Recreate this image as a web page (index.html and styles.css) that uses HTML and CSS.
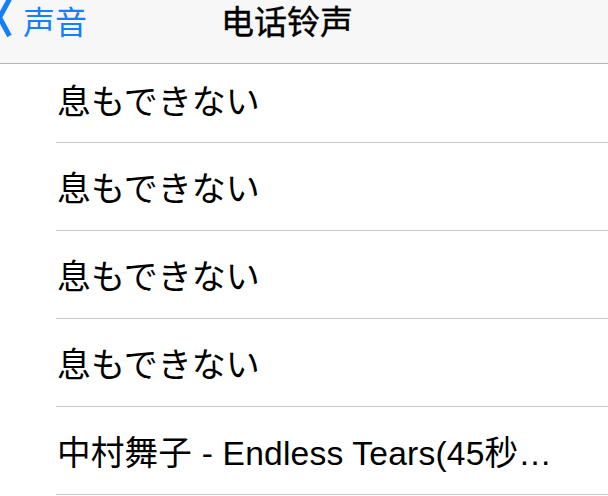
FILE: index.html
```html
<!DOCTYPE html>
<html lang="zh">
<head>
<meta charset="utf-8">
<link rel="stylesheet" href="styles.css">
</head>
<body>
<header class="navbar">
  <a class="back">
    <svg class="chev" width="14" height="40" viewBox="0 0 14 40"><path d="M9.5 -1 L-0.5 17.5 L9.5 36" fill="none" stroke="#157efb" stroke-width="5" stroke-linecap="butt" stroke-linejoin="miter"/></svg>
    <span class="back-label">声音</span>
  </a>
  <h1 class="title">电话铃声</h1>
</header>
<ul class="list">
  <li class="row first"><span class="label">息もできない</span></li>
  <li class="row"><span class="label">息もできない</span></li>
  <li class="row"><span class="label">息もできない</span></li>
  <li class="row"><span class="label">息もできない</span></li>
  <li class="row"><span class="label small">中村舞子 - Endless Tears(45秒…</span></li>
</ul>
</body>
</html>
```
FILE: styles.css
```css
* { box-sizing: border-box; }
html, body { margin: 0; padding: 0; background: #ffffff; }
body {
  width: 608px;
  height: 496px;
  overflow: hidden;
  font-family: "Liberation Sans", "Noto Sans CJK JP", "Noto Sans CJK SC", sans-serif;
}
.navbar {
  position: relative;
  height: 64px;
  background: #f7f7f7;
  border-bottom: 1px solid #b4b4b4;
  display: flex;
  align-items: flex-start;
  justify-content: center;
}
.back {
  position: absolute;
  left: 0;
  top: 0;
  display: flex;
  align-items: flex-start;
  color: #157efb;
}
.chev { display: block; }
.back-label {
  font-family: "Noto Sans CJK SC", sans-serif;
  font-size: 32px;
  line-height: 40px;
  margin-left: 9px;
}
.title {
  margin: 0 34px 0 0;
  font-family: "Noto Sans CJK SC", sans-serif;
  font-size: 33px;
  font-weight: 400;
  line-height: 40px;
  color: #000;
  -webkit-text-stroke: 0.4px #000;
}
.list {
  list-style: none;
  margin: 0;
  padding: 0 0 0 56px;
}
.row {
  height: 88px;
  border-bottom: 1px solid #c8c7cc;
  display: flex;
  align-items: center;
  padding-left: 1px;
}
.row.first {
  height: 79px;
  padding-bottom: 8px;
}
.label {
  font-size: 34px;
  color: #000;
  white-space: nowrap;
}
.label.small {
  font-size: 33.6px;
  letter-spacing: 0.2px;
}
```
